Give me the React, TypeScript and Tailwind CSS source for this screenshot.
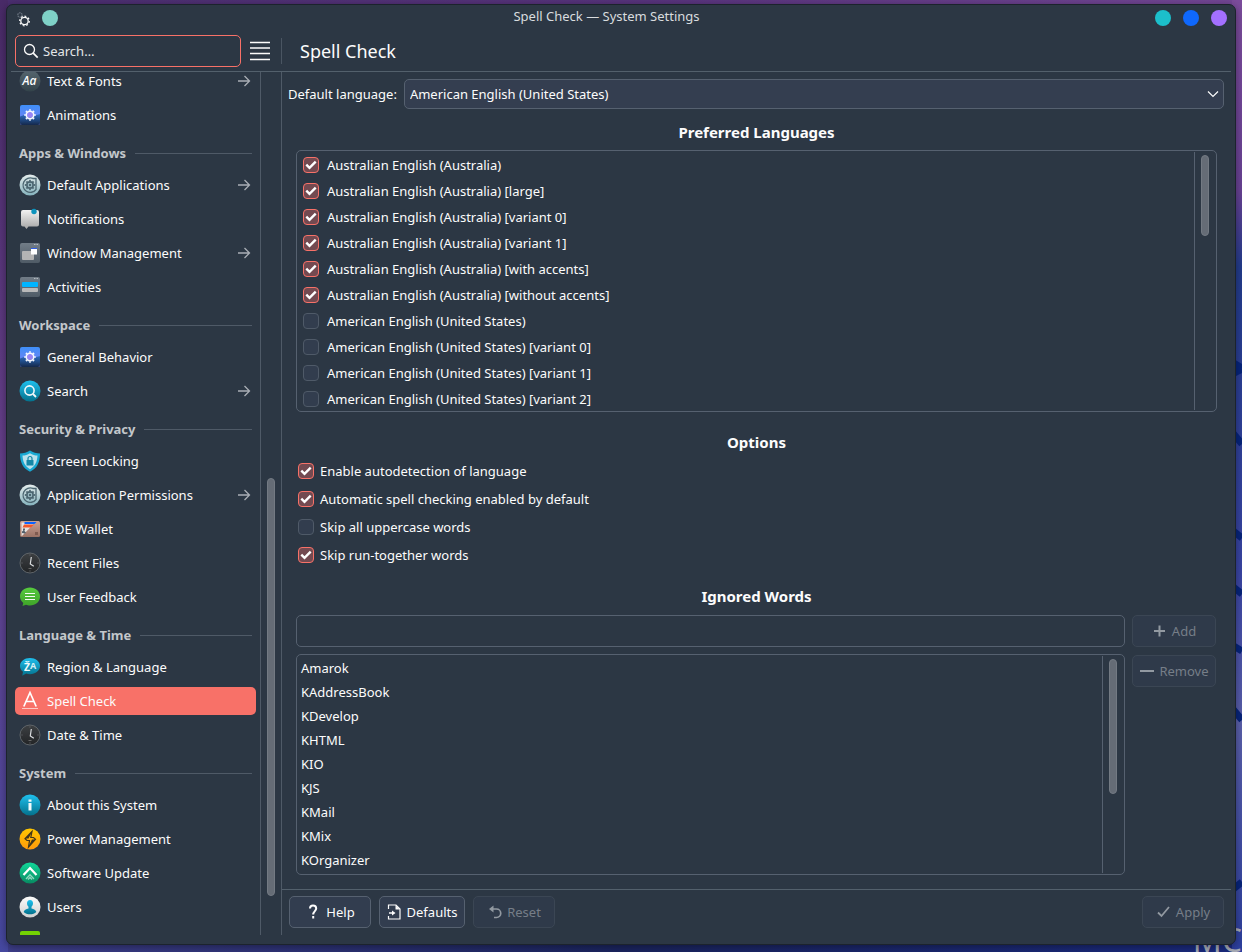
import { useState, type ReactNode } from "react";
import clsx from "clsx";

type IconName =
  | "fonts"
  | "plasma"
  | "apps"
  | "notifications"
  | "windows"
  | "activities"
  | "search"
  | "lock"
  | "wallet"
  | "clock"
  | "feedback"
  | "region"
  | "spelling"
  | "about"
  | "power"
  | "update"
  | "users"
  | "tablet";

interface NavItem {
  label: string;
  icon: IconName;
  nested?: boolean;
}

interface NavSection {
  title?: string;
  items: NavItem[];
}

const sections: NavSection[] = [
  {
    items: [
      { label: "Text & Fonts", icon: "fonts", nested: true },
      { label: "Animations", icon: "plasma" },
    ],
  },
  {
    title: "Apps & Windows",
    items: [
      { label: "Default Applications", icon: "apps", nested: true },
      { label: "Notifications", icon: "notifications" },
      { label: "Window Management", icon: "windows", nested: true },
      { label: "Activities", icon: "activities" },
    ],
  },
  {
    title: "Workspace",
    items: [
      { label: "General Behavior", icon: "plasma" },
      { label: "Search", icon: "search", nested: true },
    ],
  },
  {
    title: "Security & Privacy",
    items: [
      { label: "Screen Locking", icon: "lock" },
      { label: "Application Permissions", icon: "apps", nested: true },
      { label: "KDE Wallet", icon: "wallet" },
      { label: "Recent Files", icon: "clock" },
      { label: "User Feedback", icon: "feedback" },
    ],
  },
  {
    title: "Language & Time",
    items: [
      { label: "Region & Language", icon: "region" },
      { label: "Spell Check", icon: "spelling" },
      { label: "Date & Time", icon: "clock" },
    ],
  },
  {
    title: "System",
    items: [
      { label: "About this System", icon: "about" },
      { label: "Power Management", icon: "power" },
      { label: "Software Update", icon: "update" },
      { label: "Users", icon: "users" },
    ],
  },
];

const languages = [
  { label: "Australian English (Australia)", checked: true },
  { label: "Australian English (Australia) [large]", checked: true },
  { label: "Australian English (Australia) [variant 0]", checked: true },
  { label: "Australian English (Australia) [variant 1]", checked: true },
  { label: "Australian English (Australia) [with accents]", checked: true },
  { label: "Australian English (Australia) [without accents]", checked: true },
  { label: "American English (United States)", checked: false },
  { label: "American English (United States) [variant 0]", checked: false },
  { label: "American English (United States) [variant 1]", checked: false },
  { label: "American English (United States) [variant 2]", checked: false },
];

const options = [
  { label: "Enable autodetection of language", checked: true },
  { label: "Automatic spell checking enabled by default", checked: true },
  { label: "Skip all uppercase words", checked: false },
  { label: "Skip run-together words", checked: true },
];

const ignoredWords = [
  "Amarok",
  "KAddressBook",
  "KDevelop",
  "KHTML",
  "KIO",
  "KJS",
  "KMail",
  "KMix",
  "KOrganizer",
];

function IconDefs() {
  const gradients = [
    { id: "g-slate", from: "#56666f", to: "#33434a" },
    { id: "g-mist", from: "#e4ecec", to: "#86b3bd" },
    { id: "g-paper", from: "#f2f2f2", to: "#a5a5a5" },
    { id: "g-frame", from: "#717c87", to: "#4f5b66" },
    { id: "g-sky", from: "#1fc0ee", to: "#04718c" },
    { id: "g-dark", from: "#3d4043", to: "#222426" },
    { id: "g-green", from: "#57cb3e", to: "#3fa329" },
    { id: "g-amber", from: "#ffc700", to: "#ff9a0c" },
    { id: "g-mint", from: "#12d79a", to: "#078a61" },
    { id: "g-white", from: "#fbfbfb", to: "#d0d0d0" },
    { id: "g-blue", from: "#3f8ff8", to: "#7f7df2" },
    { id: "g-navy", from: "#2c6fc4", to: "#15284b" },
    { id: "g-leather", from: "#c9a193", to: "#9b7265" },
  ];
  return (
    <svg width="0" height="0" className="absolute" aria-hidden="true">
      <defs>
        {gradients.map((g) => (
          <linearGradient key={g.id} id={g.id} x1="0" y1="0" x2="0" y2="1">
            <stop offset="0" stopColor={g.from} />
            <stop offset="1" stopColor={g.to} />
          </linearGradient>
        ))}
      </defs>
    </svg>
  );
}

function Gear({ r, color, width }: { r: number; color: string; width: number }) {
  return (
    <g stroke={color} fill="none">
      <circle cx="11" cy="11" r={r} strokeWidth={width} />
      <circle
        cx="11"
        cy="11"
        r={r + width * 0.75}
        strokeWidth={width * 0.8}
        pathLength="32"
        strokeDasharray="2 2"
        strokeDashoffset="1"
      />
    </g>
  );
}

const iconShapes: Record<IconName, ReactNode> = {
  fonts: (
    <>
      <circle cx="11" cy="11" r="10.5" fill="url(#g-slate)" />
      <text x="10.500" y="14.5" textAnchor="middle" fontSize="12" fontStyle="italic" fontWeight="500" fill="#fff">
        Aa
      </text>
    </>
  ),
  plasma: (
    <>
      <rect x="1" y="1" width="20" height="20" rx="2" fill="url(#g-blue)" />
      <path d="M1 12.5l4-1.5 5 2.5 6-2 5-1.5V19a2 2 0 0 1-2 2H3a2 2 0 0 1-2-2z" fill="url(#g-navy)" />
      <Gear r={3.6} color="#f4f6ff" width={1.8} />
      <circle cx="11" cy="11" r="2.7" fill="#9a83f5" />
    </>
  ),
  apps: (
    <>
      <circle cx="11" cy="11" r="10.5" fill="url(#g-mist)" />
      <path d="M14 4.500A7.200 7.200 0 1 0 17 15.500M13.500 4.500H17V16" fill="none" stroke="#4b6570" strokeWidth="1.300" />
      <Gear r={3} color="#4b6570" width={1.900} />
      <circle cx="11" cy="11" r="2.300" fill="#9cbcc4" />
      <circle cx="11" cy="11" r="1.200" fill="#4b6570" />
    </>
  ),
  notifications: (
    <>
      <path d="M4 2h14a2 2 0 0 1 2 2v12.500a2 2 0 0 1-2 2H9.500L7.500 21l-2-2.500H4a2 2 0 0 1-2-2V4a2 2 0 0 1 2-2z" fill="url(#g-paper)" />
      <circle cx="15" cy="3.500" r="2.700" fill="#0d93bd" />
    </>
  ),
  windows: (
    <>
      <rect x="1" y="1" width="20" height="20" rx="2" fill="url(#g-frame)" />
      <path d="M15 2.500h1.500M17.500 2.500H19" stroke="#b4bbc1" />
      <rect x="3" y="9" width="12" height="9" rx="1" fill="#b4b4b4" />
      <rect x="12" y="6" width="6" height="6.500" fill="#fff" />
      <path d="M12 6.500h6" stroke="#2f5ee8" />
    </>
  ),
  activities: (
    <>
      <rect x="1" y="1" width="20" height="20" rx="2" fill="url(#g-frame)" />
      <path d="M15 2.500h1.500M17.500 2.500H19" stroke="#b4bbc1" />
      <rect x="3" y="6" width="16" height="5" rx="1" fill="#00b4ff" />
      <rect x="3" y="12" width="16" height="4" rx="1" fill="#b9b9b9" />
    </>
  ),
  search: (
    <>
      <circle cx="11" cy="11" r="10.500" fill="url(#g-sky)" />
      <circle cx="10.500" cy="10.500" r="4.600" fill="none" stroke="#f1f8fa" strokeWidth="1.600" />
      <path d="M14 14l3 3" stroke="#f1f8fa" strokeWidth="1.800" />
    </>
  ),
  lock: (
    <>
      <path d="M11 .5c3 2 6.500 3 10 3 0 9-3 15-10 18.200C4 18.500 1 12.500 1 3.500c3.500 0 7-1 10-3z" fill="#19a9d3" />
      <path d="M11 3.200c2.500 1.400 5 2.200 7.500 2.400C18.200 12 16 16.500 11 19.200 6 16.500 3.800 12 3.500 5.600 6 5.400 8.500 4.600 11 3.200z" fill="#b9e1ec" />
      <rect x="7.500" y="10" width="7" height="5.500" rx=".5" fill="#1487a6" />
      <path d="M9 10V8.500a2 2 0 0 1 4 0V10" fill="none" stroke="#1487a6" strokeWidth="1.200" />
    </>
  ),
  wallet: (
    <>
      <rect x="1" y="3" width="20" height="16" rx="1.500" fill="url(#g-leather)" />
      <path d="M2.500 4.500H16L3 18H2.500z" fill="#e8e3e0" />
      <path d="M5.500 4h12l-2 2h-10z" fill="#0b63ff" />
      <path d="M5 6.500h10L12 9.500H3.500z" fill="#f2572b" />
      <path d="M3 15v-1.500l1.500-1 1 .500 1.500 1.500-1 1zM4 10.500h2v2H4z" fill="#53606b" />
      <path d="M16 14h3v3h-3z" fill="#7f5b50" />
    </>
  ),
  clock: (
    <>
      <circle cx="11" cy="11" r="10" fill="url(#g-dark)" stroke="#5f6468" />
      <path d="M11 2.500v1M11 18.500v1M2.500 11h1M18.500 11h1" stroke="#6d7276" />
      <path d="M12.300 5l-1 7 3.500 2.300" fill="none" stroke="#d9dcde" strokeWidth="1.200" />
      <path d="M9.500 16.500h3" stroke="#777" strokeWidth=".8" />
    </>
  ),
  feedback: (
    <>
      <path d="M11 1.500c5.500 0 10 3.800 10 9s-4.500 9-10 9c-1.500 0-3-.3-4-.7L3.500 20l.8-3C2.200 15.300 1 13 1 10.500c0-5.200 4.500-9 10-9z" fill="url(#g-green)" />
      <path d="M6 7.500h10M6 10.500h10M6 13.500h10" stroke="#f3fbf1" />
    </>
  ),
  region: (
    <>
      <path d="M11 2c5.500 0 10 3.500 10 8s-4.500 8.200-10 8.200c-1.500 0-2.700-.2-3.800-.6L3.200 19.800l.8-4C2.200 14.500 1 12.500 1 10c0-4.500 4.500-8 10-8z" fill="url(#g-sky)" />
      <text x="8" y="14.500" textAnchor="middle" fontSize="10.500" fontWeight="700" fill="#f1fafc">
        Ž
      </text>
      <text x="14" y="12.500" textAnchor="middle" fontSize="9" fontWeight="700" fill="#d2eef5">
        A
      </text>
    </>
  ),
  spelling: (
    <>
      <path d="M4.800 16.500L11 2.500l6.200 14M7 11.500h8" fill="none" stroke="#fff" strokeWidth="1.700" />
      <path d="M3 18.500h16" stroke="#fdc9c5" />
    </>
  ),
  about: (
    <>
      <circle cx="11" cy="11" r="10.500" fill="url(#g-sky)" />
      <path d="M11 5.500v2.300M11 9v7.500" stroke="#f1fafc" strokeWidth="3" />
    </>
  ),
  power: (
    <>
      <circle cx="11" cy="11" r="10.500" fill="url(#g-amber)" />
      <path d="M13 3.500L6 10.800l2 1.700h2.500L9.500 19l7-7.800-2-1.700h-2.700z" fill="none" stroke="#40361c" strokeWidth="1.200" />
      <path d="M13.500 3L6 10.500h3.500zM9 19.500l7.500-8H13z" fill="#40361c" />
    </>
  ),
  update: (
    <>
      <circle cx="11" cy="11" r="10.500" fill="url(#g-mint)" />
      <path d="M4.500 13L11 6l6.500 7" fill="none" stroke="#fff" strokeWidth="2.200" />
      <path d="M7 17l4-4.300 4 4.300M9 17.500l2-2 2 2" fill="none" stroke="#8fd9bf" strokeWidth="1.300" />
    </>
  ),
  users: (
    <>
      <circle cx="11" cy="11" r="10.500" fill="url(#g-white)" />
      <path d="M11 4c2 0 3 1.300 3 3.300 0 1.600-.6 2.700-1.500 3.500v1.700c2.500.4 4.500 1.500 4.800 3.500-1.500 1.600-3.800 2.300-6.300 2.300S6.200 17.600 4.700 16c.3-2 2.300-3.100 4.800-3.500v-1.700C8.600 10 8 8.900 8 7.300 8 5.300 9 4 11 4z" fill="url(#g-sky)" />
    </>
  ),
  tablet: <rect x="1" y="1" width="20" height="20" rx="2" fill="#74d204" />,
};

function Icon({ name }: { name: IconName }) {
  return (
    <svg width="22" height="22" viewBox="0 0 22 22" className="shrink-0" aria-hidden="true">
      {iconShapes[name]}
    </svg>
  );
}

function NavLink({ item, active }: { item: NavItem; active: boolean }) {
  return (
    <a
      href="#"
      aria-current={active ? "page" : undefined}
      className={clsx(
        "my-[3px] ml-2 mr-1 flex h-7 shrink-0 items-center gap-[6px] rounded-[5px] pl-1 pr-[5px]",
        active && "bg-[#f87168]"
      )}
    >
      <Icon name={item.icon} />
      <span className="flex-1">{item.label}</span>
      {item.nested && (
        <svg width="14" height="14" viewBox="0 0 14 14" fill="none" stroke="#a9aeb5" strokeWidth="1.300" aria-hidden="true">
          <path d="M1 7h11.500M7.500 2l5 5-5 5" />
        </svg>
      )}
    </a>
  );
}

function Thumb({ className }: { className: string }) {
  return <div className={clsx("w-2 rounded-full border border-[#737a83] bg-[#656c76]", className)} />;
}

function CheckRow({
  label,
  defaultChecked,
  className,
}: {
  label: string;
  defaultChecked: boolean;
  className: string;
}) {
  return (
    <label className={clsx("flex items-center", className)}>
      <span className="grid size-4 shrink-0 *:col-start-1 *:row-start-1">
        <input
          type="checkbox"
          defaultChecked={defaultChecked}
          className="peer size-4 appearance-none rounded-[4px] border border-[#4f5a68] bg-[#323d4e] checked:border-[#f87168] checked:bg-[#734a51]"
        />
        <svg
          viewBox="0 0 16 16"
          className="pointer-events-none invisible size-4 peer-checked:visible"
          fill="none"
          stroke="#fff"
          strokeWidth="2.400"
          aria-hidden="true"
        >
          <path d="M3.300 7.700l3.200 3.200 6.200-6.200" />
        </svg>
      </span>
      {label}
    </label>
  );
}

function ActionButton({
  label,
  icon,
  disabled,
  className,
}: {
  label: string;
  icon: ReactNode;
  disabled?: boolean;
  className: string;
}) {
  return (
    <button
      type="button"
      disabled={disabled}
      className={clsx(
        "flex h-8 items-center justify-center rounded-[5px] border",
        disabled ? "border-[#3b4654] bg-[#2f3a4a] text-[#767e88]" : "border-[#566170] bg-[#323d4f]",
        className
      )}
    >
      <svg
        width="16"
        height="16"
        viewBox="0 0 16 16"
        fill="none"
        stroke={disabled ? "#9299a1" : "#fcfcfc"}
        strokeWidth="1.500"
        className="shrink-0"
        aria-hidden="true"
      >
        {icon}
      </svg>
      {label}
    </button>
  );
}

function Wallpaper() {
  return (
    <div className="absolute inset-0 overflow-hidden bg-linear-to-r from-[#3f3f8c] via-[#1b2560] to-[#1a2a80]" aria-hidden="true">
      <div className="absolute inset-x-0 top-0 h-2 bg-linear-to-r from-[#4b2e70] via-[#57337c] to-[#744796]" />
      <div className="absolute inset-y-0 left-0 w-2 bg-linear-to-b from-[#492b68] via-[#66408c] to-[#4548a0]" />
      <svg className="absolute right-0 top-0" width="10" height="952" viewBox="0 0 10 952">
        <defs>
          <linearGradient id="g-edge" x1="0" y1="0" x2="0" y2="1">
            <stop offset="0" stopColor="#7c4c9c" />
            <stop offset=".2" stopColor="#694294" />
            <stop offset=".28" stopColor="#233c8c" />
            <stop offset=".6" stopColor="#3a45a4" />
            <stop offset=".76" stopColor="#5b60ab" />
            <stop offset="1" stopColor="#2c3f9e" />
          </linearGradient>
        </defs>
        <rect width="10" height="952" fill="url(#g-edge)" />
        <path
          d="M0 362l10 6M0 374l10-5M0 432l10 12M0 530l10 8M0 586l10 8M0 645l10 6M0 708l10 12M0 890l10-8"
          stroke="#07257c"
          strokeWidth="7"
        />
      </svg>
      <p className="absolute -bottom-1 right-0 text-[32px] leading-none text-[#a9adb8]">MC</p>
    </div>
  );
}

export default function App() {
  const [search, setSearch] = useState("");
  const [word, setWord] = useState("");

  return (
    <div className="relative flex h-screen overflow-hidden pb-[7px] pl-[6px] pr-[6px] pt-1 font-['Noto_Sans',sans-serif] text-[13px] leading-[18px] text-[#fcfcfc]">
      <IconDefs />
      <Wallpaper />
      <div className="relative flex min-w-0 flex-1 flex-col rounded-[7px] border border-[#1c232d] bg-[#2c3744] pb-[9px] shadow-[0_2px_8px_rgba(0,0,0,0.4)]">
        <header className="flex h-[26px] shrink-0 items-center px-2">
          <svg width="16" height="16" viewBox="0 0 16 16" className="ml-[2px] mt-1" aria-hidden="true">
            <g fill="none">
              <circle cx="3" cy="3" r="2.200" stroke="#6b7480" strokeWidth="1.200" strokeDasharray="1.500 .6" />
              <circle cx="7.500" cy="9" r="3.700" stroke="#fcfcfc" strokeWidth="1.300" />
              <circle cx="7.500" cy="9" r="4.800" stroke="#fcfcfc" strokeWidth="1.200" pathLength="32" strokeDasharray="2 2" />
            </g>
          </svg>
          <button type="button" aria-label="Keep above" className="ml-[9px] size-4 rounded-full bg-[#7fd1c7]" />
          <h1 className="flex-1 pb-1 text-center text-[#d9dcdf]">Spell Check — System Settings</h1>
          <div className="flex gap-3">
            <button type="button" aria-label="Minimize" className="size-4 rounded-full bg-[#1cbfcb]" />
            <button type="button" aria-label="Maximize" className="size-4 rounded-full bg-[#0f68fd]" />
            <button type="button" aria-label="Close" className="size-4 rounded-full bg-[#a370ff]" />
          </div>
        </header>

        <div className="mx-1 flex h-[41px] shrink-0 items-center border-b border-[#53606c] pl-1">
          <label className="flex h-8 w-[226px] items-center gap-1 rounded-[5px] border border-[#f87168] pl-[7px]">
            <svg width="16" height="16" viewBox="0 0 16 16" fill="none" stroke="#fcfcfc" strokeWidth="1.300" aria-hidden="true">
              <circle cx="6.500" cy="6.500" r="5" />
              <path d="M10.200 10.200l4.500 4.500" strokeWidth="1.700" />
            </svg>
            <input
              type="text"
              aria-label="Search"
              placeholder="Search…"
              value={search}
              onChange={(e) => setSearch(e.target.value)}
              className="min-w-0 flex-1 bg-transparent outline-none placeholder:text-[#e4e6e8]"
            />
          </label>
          <button type="button" aria-label="Menu" className="ml-[9px]">
            <svg width="20" height="20" viewBox="0 0 20 20" stroke="#fcfcfc" strokeWidth="1.500">
              <path d="M0 1.500h20M0 7h20M0 12.500h20M0 18.500h20" />
            </svg>
          </button>
          <div className="ml-[11px] h-[26px] w-px bg-[#4a5562]" />
          <h2 className="ml-[18px] text-[18px] leading-6">Spell Check</h2>
        </div>

        <div className="flex min-h-0 flex-1">
          <nav className="flex w-[253px] shrink-0 flex-col overflow-hidden">
            <div className="-mt-2 flex flex-col">
              {sections.map((section) => (
                <div key={section.items[0].label} className="flex flex-col">
                  {section.title && (
                    <h3 className="ml-3 mr-2 flex h-9 items-center gap-[9px] pt-[6px] font-bold text-[#c3c7cb]">
                      {section.title}
                      <span className="h-px flex-1 bg-[#4f5a67]" />
                    </h3>
                  )}
                  {section.items.map((item) => (
                    <NavLink key={item.label} item={item} active={item.label === "Spell Check"} />
                  ))}
                </div>
              ))}
              <div className="my-[3px] ml-3 flex h-7 items-center">
                <Icon name="tablet" />
              </div>
            </div>
          </nav>
          <div className="flex w-[22px] shrink-0 flex-col items-center border-x border-[#4f5a67]">
            <div className="flex-[407]" />
            <Thumb className="flex-[417]" />
            <div className="flex-[39]" />
          </div>

          <main className="mr-1 flex min-w-0 flex-1 flex-col">
            <div className="flex min-h-0 flex-1 flex-col pl-[6px] pr-[7px] pt-[7px]">
              <div className="flex items-center gap-[7px]">
                <label htmlFor="default-language">Default language:</label>
                <div className="grid flex-1 items-center *:col-start-1 *:row-start-1">
                  <select
                    id="default-language"
                    className="h-[30px] w-full appearance-none rounded-[5px] border border-[#566170] bg-[#343e50] px-[5px]"
                  >
                    <option>American English (United States)</option>
                  </select>
                  <svg
                    width="12"
                    height="8"
                    viewBox="0 0 12 8"
                    fill="none"
                    stroke="#fcfcfc"
                    strokeWidth="1.200"
                    className="pointer-events-none mr-[5px] justify-self-end"
                    aria-hidden="true"
                  >
                    <path d="M1 1.500l5 5 5-5" />
                  </svg>
                </div>
              </div>

              <div className="flex min-h-0 flex-1 flex-col pl-2 pr-[7px]">
                <h3 className="mt-[11px] text-center text-[15px] font-bold leading-6">Preferred Languages</h3>
                <div className="mt-[6px] flex h-[262px] shrink-0 rounded-[5px] border border-[#566170] py-px">
                  <ul className="flex-1 overflow-hidden pl-[6px]">
                    {languages.map((lang) => (
                      <li key={lang.label}>
                        <CheckRow label={lang.label} defaultChecked={lang.checked} className="h-[26px] gap-2" />
                      </li>
                    ))}
                  </ul>
                  <div className="w-[22px] border-l border-[#566170] pl-[6px] pt-[3px]">
                    <Thumb className="h-[81px]" />
                  </div>
                </div>

                <h3 className="mt-[18px] text-center text-[15px] font-bold leading-6">Options</h3>
                <div className="mt-[3px] pl-[2px]">
                  {options.map((option) => (
                    <CheckRow
                      key={option.label}
                      label={option.label}
                      defaultChecked={option.checked}
                      className="h-7 gap-[6px]"
                    />
                  ))}
                </div>

                <h3 className="mt-[15px] text-center text-[15px] font-bold leading-6">Ignored Words</h3>
                <div className="mb-[14px] mt-[7px] flex min-h-0 flex-1 gap-[7px] pr-px">
                  <div className="flex min-w-0 flex-1 flex-col gap-[7px]">
                    <input
                      type="text"
                      aria-label="Ignored word"
                      value={word}
                      onChange={(e) => setWord(e.target.value)}
                      className="h-8 shrink-0 rounded-[5px] border border-[#566170] bg-transparent px-[5px] outline-none"
                    />
                    <div className="flex min-h-0 flex-1 rounded-[5px] border border-[#566170] py-px">
                      <ul className="flex-1 overflow-hidden pl-1">
                        {ignoredWords.map((w) => (
                          <li key={w} className="flex h-6 items-center">
                            {w}
                          </li>
                        ))}
                      </ul>
                      <div className="w-[22px] border-l border-[#566170] pl-[6px] pt-[3px]">
                        <Thumb className="h-[135px]" />
                      </div>
                    </div>
                  </div>
                  <div className="flex w-[84px] flex-col gap-2">
                    <ActionButton label="Add" disabled className="gap-1" icon={<path d="M2 8h11M7.500 2.500v11" strokeWidth="2" />} />
                    <ActionButton label="Remove" disabled className="gap-1" icon={<path d="M1 8h14" strokeWidth="2" />} />
                  </div>
                </div>
              </div>
            </div>

            <footer className="flex h-[46px] shrink-0 items-start gap-2 border-t border-[#53606c] px-[7px] pt-[6px]">
              <ActionButton
                label="Help"
                className="w-[82px] gap-[5px]"
                icon={<path d="M5 4.500C5 2.500 6.300 1.500 8 1.500s3.200 1 3.200 3C11.200 7 8.200 7.300 8.200 10.500M8.200 12v2.500" strokeWidth="2" />}
              />
              <ActionButton
                label="Defaults"
                className="w-[86px] gap-1"
                icon={
                  <>
                    <path d="M1.500 5V1h7.500l4 4v10h-11.500v-3" strokeWidth="1.200" />
                    <path d="M8.500 1v4.500H13z" fill="#fcfcfc" stroke="none" />
                    <path d="M2 9h3.500" />
                    <path d="M5 6.500L8.500 9 5 11.500z" fill="#fcfcfc" stroke="none" />
                  </>
                }
              />
              <ActionButton
                label="Reset"
                disabled
                className="w-[82px] gap-1"
                icon={
                  <>
                    <path d="M4 5h5.500a4 4 0 0 1 0 8.500H7" strokeWidth="1.700" />
                    <path d="M6.500 1.500v7L2 5z" fill="#9299a1" stroke="none" />
                  </>
                }
              />
              <div className="flex-1" />
              <ActionButton
                label="Apply"
                disabled
                className="w-[82px] gap-1"
                icon={<path d="M2 8.500l3.500 3.500 7.500-9" strokeWidth="1.800" />}
              />
            </footer>
          </main>
        </div>
      </div>
    </div>
  );
}
